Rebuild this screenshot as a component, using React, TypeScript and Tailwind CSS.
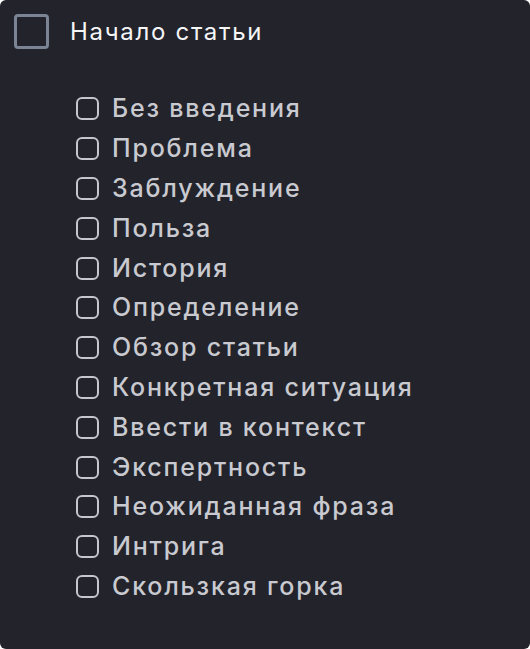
const items = [
  "Без введения",
  "Проблема",
  "Заблуждение",
  "Польза",
  "История",
  "Определение",
  "Обзор статьи",
  "Конкретная ситуация",
  "Ввести в контекст",
  "Экспертность",
  "Неожиданная фраза",
  "Интрига",
  "Скользкая горка",
];

export default function App() {
  return (
    <div className="w-[530px] h-[649px] bg-white">
      <div
        className="w-full h-full bg-[#22232b] rounded-[6px] pt-[14px] pl-[14px]"
        style={{ fontFamily: 'Inter, "Liberation Sans", Arial, sans-serif' }}
      >
        <div className="flex items-center">
          <div className="w-[35px] h-[35px] rounded-[4px] border-[3px] border-[#7a8494]" />
          <span className="ml-[21px] text-[24px] text-[#f5f5f7] leading-none tracking-[1.7px]">Начало статьи</span>
        </div>
        <ul className="mt-[40px] pl-[62px]">
          {items.map((item) => (
            <li key={item} className="flex items-center h-[39.8px]">
              <div className="w-[23px] h-[23px] rounded-[6px] border-2 border-[#c6c7cd]" />
              <span className="ml-[13px] text-[25px] font-medium text-[#c9cad0] leading-none tracking-[1.8px]">{item}</span>
            </li>
          ))}
        </ul>
      </div>
    </div>
  );
}
